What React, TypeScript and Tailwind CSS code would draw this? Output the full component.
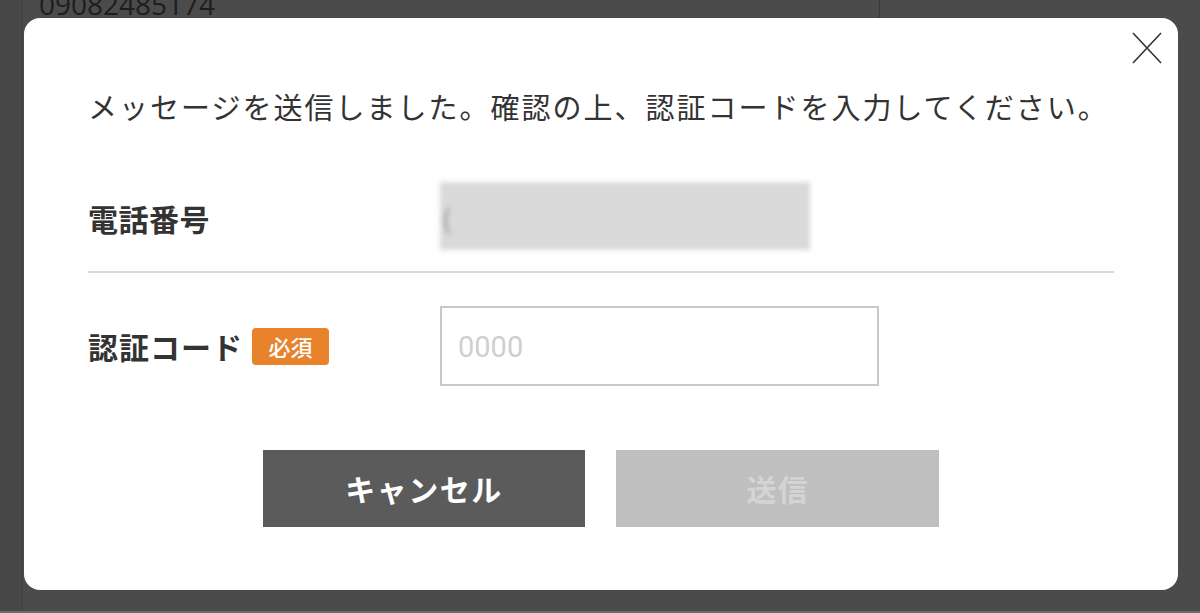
import React from "react";

const jp = { fontFamily: '"Noto Sans CJK JP", "Noto Sans", sans-serif' };

export default function App() {
  return (
    <div className="relative w-[1200px] h-[613px] overflow-hidden bg-[#4b4b4b]" style={jp}>
      {/* background page peeking behind overlay */}
      <div className="absolute inset-0 flex">
        <div className="w-[23px] h-full bg-[#474747] border-r border-[#3f3f3f]" />
        <div className="w-[857px] h-[18px] border-r border-[#3a3a3a] relative">
          <span
            className="absolute left-[16px] top-[-12px] text-[28px] leading-[32px] text-[#1e1e1e]"
            style={{ fontFamily: '"Open Sans", "Noto Sans", sans-serif' }}
          >
            09082485174
          </span>
        </div>
      </div>
      <div className="absolute left-0 right-0 bottom-0 h-[2px] bg-[#6a6a6a]" />

      {/* modal */}
      <div className="absolute left-[24px] top-[18px] w-[1154px] h-[572px] bg-white rounded-[16px] px-[64px] pt-[68px] flex flex-col text-[#333]">
        <button className="absolute right-[16px] top-[14px] w-[30px] h-[32px] flex items-center justify-center">
          <svg width="30" height="32" viewBox="0 0 30 32">
            <path d="M1 1 L29 31 M29 1 L1 31" stroke="#333" strokeWidth="1.6" fill="none" />
          </svg>
        </button>

        <p className="text-[29px] leading-[40px] tracking-[2px] text-[#333] whitespace-nowrap">
          メッセージを送信しました。確認の上、認証コードを入力してください。
        </p>

        <div className="mt-[56px] h-[68px] flex items-center">
          <div className="w-[352px] text-[30px] font-bold leading-[40px] tracking-[0.5px] text-[#333] pt-[4px]">電話番号</div>
          <div className="w-[370px] h-[68px] bg-[#d9d9d9] blur-[2.5px] flex items-center pl-[2px]">
            <span className="text-[26px] text-[#8a8a8a] pt-[2px]">(</span>
          </div>
        </div>

        <div className="mt-[21px] h-[2px] bg-[#dadada]" />

        <div className="mt-[33px] flex items-center">
          <div className="w-[352px] flex items-center">
            <span className="text-[30px] font-bold leading-[40px] tracking-[1px] text-[#333]">認証コード</span>
            <span className="ml-[9px] w-[77px] h-[37px] rounded-[4px] bg-[#e8822b] text-white text-[22px] leading-[37px] text-center font-medium">
              必須
            </span>
          </div>
          <div className="w-[439px] h-[80px] border-2 border-[#c8c8c8] flex items-center pl-[16px]">
            <span
              className="text-[29px] text-[#cfcfcf] pt-[4px]"
              style={{ fontFamily: 'Roboto, "Noto Sans", sans-serif' }}
            >
              0000
            </span>
          </div>
        </div>

        <div className="mt-[64px] flex justify-center gap-[31px]">
          <button className="w-[322px] h-[77px] bg-[#5b5b5b] text-white text-[30px] tracking-[1.5px] font-bold flex items-center justify-center">
            キャンセル
          </button>
          <button className="w-[323px] h-[77px] bg-[#bfbfbf] text-[#d4d4d4] text-[30px] tracking-[1px] font-bold flex items-center justify-center">
            送信
          </button>
        </div>
      </div>
    </div>
  );
}
